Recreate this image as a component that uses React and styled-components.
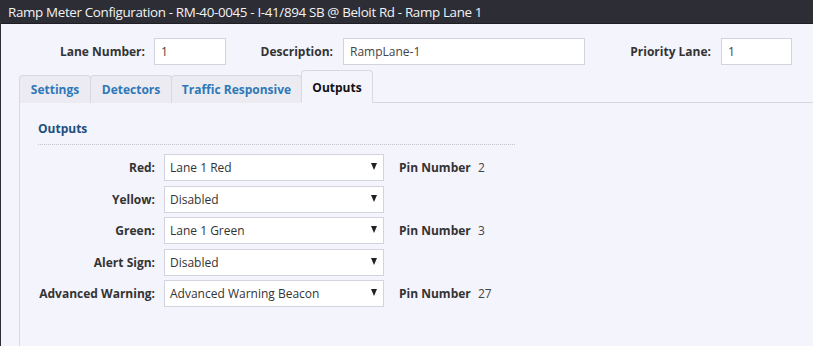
import React from "react";
import styled, { createGlobalStyle } from "styled-components";

const Global = createGlobalStyle`
  html, body { margin: 0; padding: 0; background: #f4f4fd; }
  body { font-family: "Open Sans", "Noto Sans", sans-serif; color: #333; }
  * { box-sizing: border-box; }
`;

const Window = styled.div`
  width: 813px;
  height: 346px;
  border-left: 1px solid #2e2e36;
  background: #f4f4fd;
  overflow: hidden;
`;

const TitleBar = styled.div`
  height: 24px;
  background: #2d2d35;
  color: #f2f2f2;
  font-size: 13.4px;
  letter-spacing: -0.35px;
  line-height: 24px;
  padding-left: 7px;
  white-space: nowrap;
  border-bottom: 1px solid #1e1e24;
`;

const HeaderRow = styled.div`
  display: flex;
  align-items: center;
  margin-top: 14px;
  height: 27px;
`;

const FieldLabel = styled.label`
  width: ${(p) => p.$w}px;
  text-align: right;
  font-weight: 700;
  font-size: 12px;
  color: #333;
  padding-right: ${(p) => p.$gap}px;
  white-space: nowrap;
`;

const TextInput = styled.div`
  width: ${(p) => p.$w}px;
  height: 27px;
  background: #fff;
  border: 1px solid #d3d3e0;
  font-size: 12px;
  line-height: 25px;
  padding-left: 6px;
  color: #444;
`;

const TabStrip = styled.div`
  display: flex;
  align-items: flex-end;
  margin-top: 5px;
  margin-left: 18px;
  height: 33px;
`;

const Tab = styled.div`
  height: ${(p) => (p.$active ? 33 : 28)}px;
  width: ${(p) => p.$w}px;
  display: flex;
  align-items: center;
  justify-content: center;
  padding-top: ${(p) => (p.$active ? 1 : 0)}px;
  font-weight: 700;
  font-size: 12px;
  color: ${(p) => (p.$active ? "#111" : "#2f78b8")};
  background: ${(p) => (p.$active ? "#f4f4fd" : "#ebebf1")};
  border: 1px solid #d8d8e2;
  border-bottom: ${(p) => (p.$active ? "1px solid #f4f4fd" : "none")};
  border-radius: 4px 4px 0 0;
  margin-right: ${(p) => (p.$active ? 0 : -1)}px;
  position: relative;
  z-index: ${(p) => (p.$active ? 2 : 1)};
  white-space: nowrap;
`;

const Panel = styled.div`
  margin-left: 18px;
  margin-top: -1px;
  border-left: 1px solid #d8d8e2;
  border-top: 1px solid #d8d8e2;
  padding: 17px 0 0 18px;
  height: 260px;
`;

const SectionTitle = styled.div`
  width: 477px;
  font-weight: 700;
  font-size: 12px;
  color: #1d4f7c;
  padding-bottom: 7px;
  border-bottom: 1px dotted #c4c4d0;
`;

const Rows = styled.div`
  display: flex;
  flex-direction: column;
  gap: 4.5px;
  margin-top: 9px;
`;

const Row = styled.div`
  display: flex;
  align-items: center;
  height: 27px;
`;

const RowLabel = styled.div`
  width: 126px;
  padding-right: 9px;
  text-align: right;
  font-weight: 700;
  font-size: 12px;
  color: #333;
  white-space: nowrap;
`;

const Select = styled.div`
  width: 220px;
  height: 27px;
  background: #fff;
  border: 1px solid #d3d3e0;
  display: flex;
  align-items: center;
  justify-content: space-between;
  padding: 0 6px 0 5px;
  font-size: 12px;
  color: #333;
`;

const Arrow = styled.span`
  width: 0;
  height: 0;
  border-left: 3.5px solid transparent;
  border-right: 3.5px solid transparent;
  border-top: 7px solid #222;
  margin-top: -2px;
`;

const PinLabel = styled.span`
  margin-left: 15px;
  font-weight: 700;
  font-size: 12px;
  color: #333;
  width: 79px;
  white-space: nowrap;
`;

const PinValue = styled.span`
  font-size: 12px;
  color: #444;
`;

const rows = [
  { label: "Red:", value: "Lane 1 Red", pin: "2" },
  { label: "Yellow:", value: "Disabled" },
  { label: "Green:", value: "Lane 1 Green", pin: "3" },
  { label: "Alert Sign:", value: "Disabled" },
  { label: "Advanced Warning:", value: "Advanced Warning Beacon", pin: "27" },
];

export default function App() {
  return (
    <>
      <Global />
      <Window>
        <TitleBar>Ramp Meter Configuration - RM-40-0045 - I-41/894 SB @ Beloit Rd - Ramp Lane 1</TitleBar>
        <HeaderRow>
          <FieldLabel $w={153} $gap={9}>Lane Number:</FieldLabel>
          <TextInput $w={72}>1</TextInput>
          <FieldLabel $w={117} $gap={10}>Description:</FieldLabel>
          <TextInput $w={242}>RampLane-1</TextInput>
          <FieldLabel $w={136} $gap={10}>Priority Lane:</FieldLabel>
          <TextInput $w={71}>1</TextInput>
        </HeaderRow>
        <TabStrip>
          <Tab $w={72}>Settings</Tab>
          <Tab $w={82}>Detectors</Tab>
          <Tab $w={131}>Traffic Responsive</Tab>
          <Tab $w={72} $active>Outputs</Tab>
        </TabStrip>
        <Panel>
          <SectionTitle>Outputs</SectionTitle>
          <Rows>
            {rows.map((r) => (
              <Row key={r.label}>
                <RowLabel>{r.label}</RowLabel>
                <Select>
                  <span>{r.value}</span>
                  <Arrow />
                </Select>
                {r.pin && (
                  <>
                    <PinLabel>Pin Number</PinLabel>
                    <PinValue>{r.pin}</PinValue>
                  </>
                )}
              </Row>
            ))}
          </Rows>
        </Panel>
      </Window>
    </>
  );
}
